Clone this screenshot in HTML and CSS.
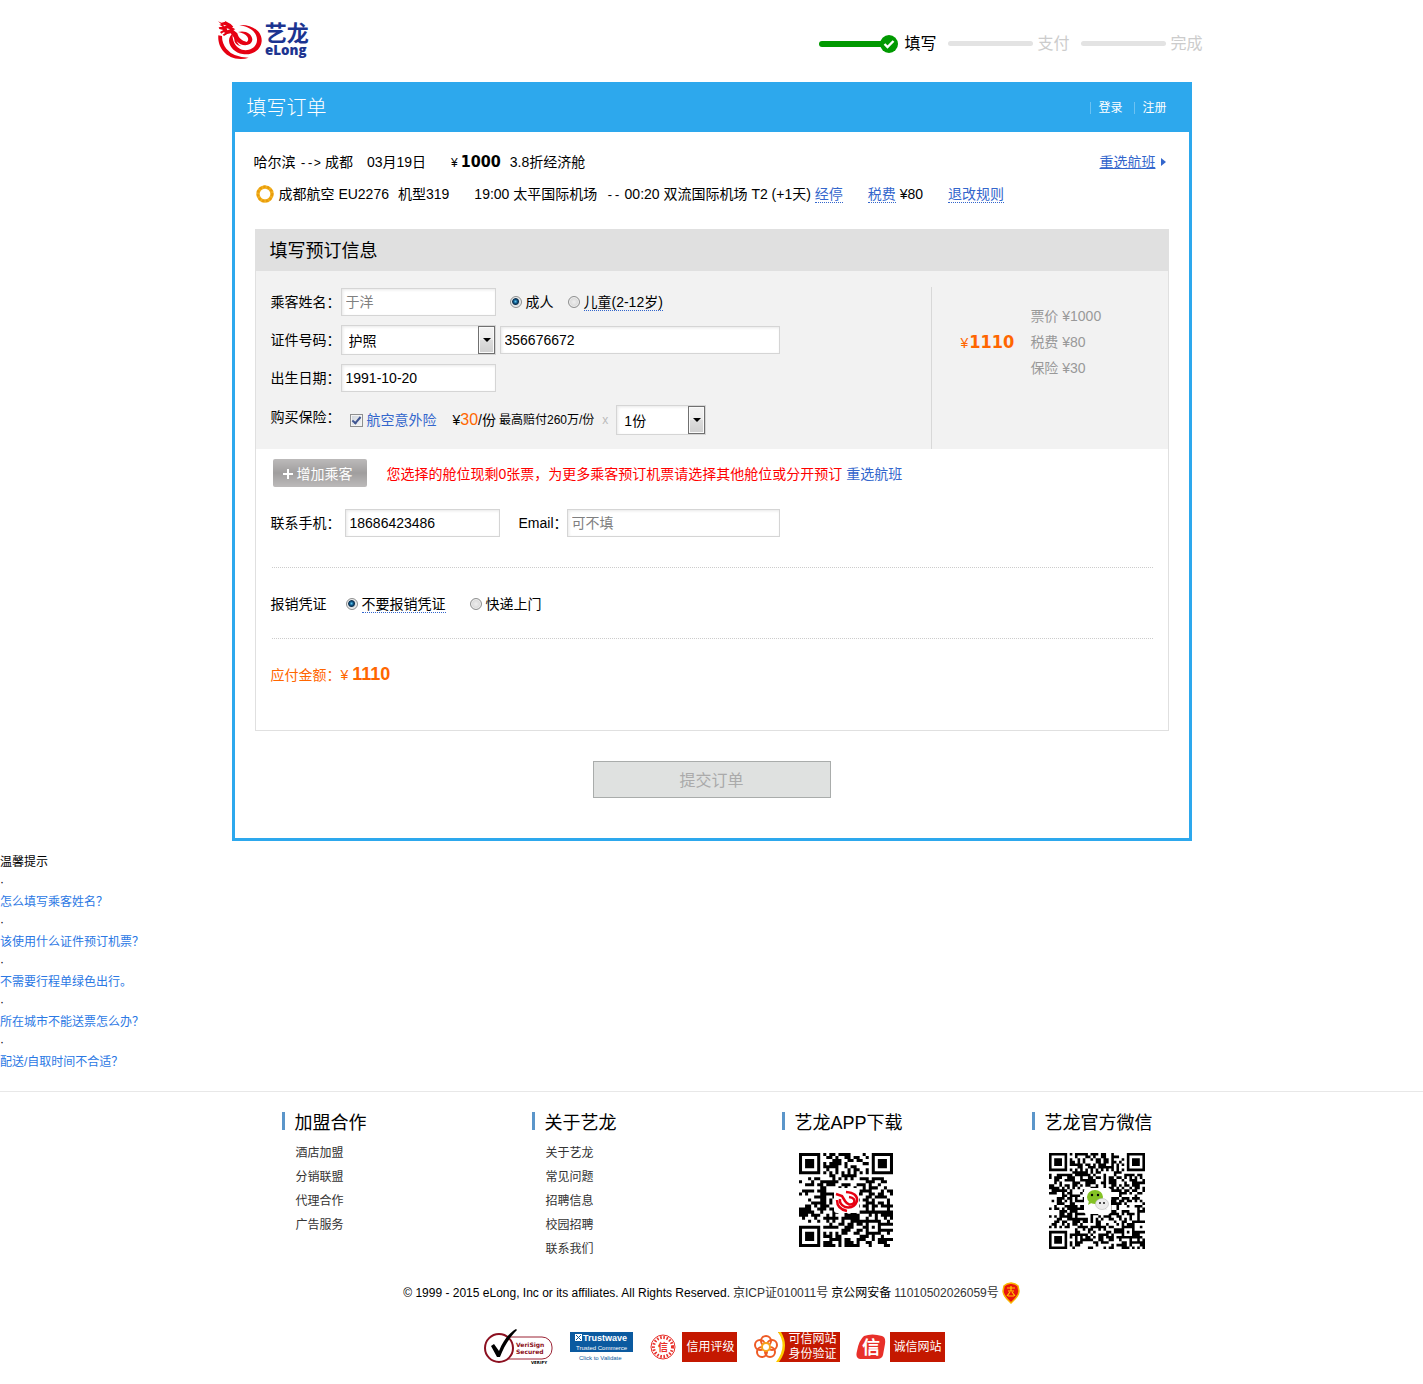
FILE: index.html
```html
<!DOCTYPE html>
<html lang="zh-CN">
<head>
<meta charset="utf-8">
<title>填写订单</title>
<link rel="stylesheet" href="styles.css">
</head>
<body>
<header class="site-header">
  <a class="logo" href="#" aria-label="艺龙 eLong">
    <svg width="92" height="50" viewBox="24 6 276 150">
      <g fill="#e60012">
        <path d="M25 76C22 108 44 146 92 147Q106 147 116 143Q70 142 49 116Q36 100 36 78Z"/>
        <path d="M88 45C128 42 157 66 155 94C152 124 122 137 98 132C76 128 58 112 57 92C57 82 62 74 68 71C66 92 76 112 96 119C118 125 140 112 141 91C142 68 122 51 88 45Z"/>
        <path d="M24 34L34 38L46 35L44 32L62 42L70 50L66 52L76 58L70 60L82 70C86 84 94 92 110 96Q118 90 112 80Q104 70 84 66C104 60 126 70 127 88C127 104 108 110 92 103C76 95 70 78 62 70L52 72L42 78L38 74L46 68L40 67L34 71L30 66L40 60L28 57L26 52L38 50L28 44L34 43Z"/>
        <path d="M79 77Q76 99 94 109Q80 106 74 95Q70 86 74 76Z"/>
      </g>
      <path d="M40 44l10 3l-8 2zM50 55l10 3-8 3z" fill="#fff"/>
      <text class="logo-cn" x="164" y="94">艺龙</text>
      <text class="logo-en" x="165" y="135">eLong</text>
    </svg>
  </a>
  <ol class="steps">
    <li class="step done">
      <span class="step-bar"></span>
      <svg width="18" height="18" viewBox="0 0 18 18"><circle cx="9" cy="9" r="9" fill="#090"/><path d="M4.500 9l3 3 6-6" fill="none" stroke="#fff" stroke-width="2.400"/></svg>
      <span class="step-name">填写</span>
    </li>
    <li class="step"><span class="step-bar"></span><span class="step-name">支付</span></li>
    <li class="step"><span class="step-bar"></span><span class="step-name">完成</span></li>
  </ol>
</header>

<main class="order">
  <div class="order-head">
    <h1>填写订单</h1>
    <nav class="account"><a href="#">登录</a><a href="#">注册</a></nav>
  </div>

  <section class="flight">
    <div class="flight-row">
      <div><span>哈尔滨 <span class="dash">--&gt;</span> 成都</span><span class="gap-m">03月19日</span><span class="gap-l yen">¥</span><b class="price">1000</b><span class="gap-s">3.8折经济舱</span></div>
      <a class="rechoose" href="#"><span>重选航班</span></a>
    </div>
    <div class="flight-row">
      <div class="flight-detail">
        <svg class="carrier" width="18" height="18" viewBox="0 0 18 18"><circle cx="9" cy="9" r="7" fill="none" stroke="#f2b01e" stroke-width="3.400"/><circle cx="9" cy="9" r="7.200" fill="none" stroke="#e89b0c" stroke-width="2.400" stroke-dasharray="2.200 1.800"/></svg>
        <span>成都航空 EU2276</span><span class="gap-s">机型319</span><span class="gap-l">19:00 太平国际机场</span><span class="gap-s"><span class="dash">--</span> 00:20 双流国际机场 T2 (+1天) <a class="hint" href="#">经停</a></span><span class="gap-l"><a class="hint" href="#">税费</a> ¥80</span><a class="hint gap-l" href="#">退改规则</a>
      </div>
    </div>
  </section>

  <form class="booking">
    <h2>填写预订信息</h2>
    <div class="passenger">
      <div class="fields">
        <div class="field">
          <label class="caption" for="name">乘客姓名：</label>
          <input class="text" id="name" type="text" placeholder="于洋">
          <label class="choice"><input type="radio" name="age" checked><span>成人</span></label>
          <label class="choice"><input type="radio" name="age"><span class="hint-text">儿童(2-12岁)</span></label>
        </div>
        <div class="field">
          <label class="caption" for="idno">证件号码：</label>
          <span class="select"><select aria-label="证件类型"><option>护照</option></select></span>
          <input class="text wide" id="idno" type="text" value="356676672">
        </div>
        <div class="field">
          <label class="caption" for="birth">出生日期：</label>
          <input class="text" id="birth" type="text" value="1991-10-20">
        </div>
        <div class="field insurance">
          <span class="caption">购买保险：</span>
          <input class="tick" id="insure" type="checkbox" checked><label class="link" for="insure">航空意外险</label>
          <span class="unit">¥<span class="amount">30</span>/份</span>
          <span class="small">最高赔付260万/份</span>
          <span class="times">x</span>
          <span class="select narrow"><select aria-label="份数"><option>1份</option></select></span>
        </div>
      </div>
      <aside class="fare">
        <div class="fare-total"><span>¥</span><b>1110</b></div>
        <ul><li>票价 ¥1000</li><li>税费 ¥80</li><li>保险 ¥30</li></ul>
      </aside>
    </div>

    <div class="add-row">
      <button class="add" type="button"><svg width="10" height="10" viewBox="0 0 10 10"><path d="M5 0v10M0 5h10" stroke="#fff" stroke-width="2"/></svg>增加乘客</button>
      <p class="warning">您选择的舱位现剩0张票，为更多乘客预订机票请选择其他舱位或分开预订 <a href="#">重选航班</a></p>
    </div>

    <div class="contact">
      <label class="caption" for="phone">联系手机：</label>
      <input class="text" id="phone" type="text" value="18686423486">
      <label class="mail-caption" for="email">Email：</label>
      <input class="text mail" id="email" type="text" placeholder="可不填">
    </div>

    <div class="receipt">
      <span>报销凭证</span>
      <label class="choice"><input type="radio" name="receipt" checked><span class="hint-text">不要报销凭证</span></label>
      <label class="choice"><input type="radio" name="receipt"><span>快递上门</span></label>
    </div>

    <p class="payable">应付金额：¥ <b>1110</b></p>
  </form>

  <button class="submit" type="button">提交订单</button>
</main>

<section class="tips">
  <p>温馨提示</p>
  <ul>
    <li>·<a href="#">怎么填写乘客姓名？</a></li>
    <li>·<a href="#">该使用什么证件预订机票？</a></li>
    <li>·<a href="#">不需要行程单绿色出行。</a></li>
    <li>·<a href="#">所在城市不能送票怎么办？</a></li>
    <li>·<a href="#">配送/自取时间不合适？</a></li>
  </ul>
</section>

<footer class="site-footer">
  <div class="columns">
    <section>
      <h3>加盟合作</h3>
      <ul><li><a href="#">酒店加盟</a></li><li><a href="#">分销联盟</a></li><li><a href="#">代理合作</a></li><li><a href="#">广告服务</a></li></ul>
    </section>
    <section>
      <h3>关于艺龙</h3>
      <ul><li><a href="#">关于艺龙</a></li><li><a href="#">常见问题</a></li><li><a href="#">招聘信息</a></li><li><a href="#">校园招聘</a></li><li><a href="#">联系我们</a></li></ul>
    </section>
    <section>
      <h3>艺龙APP下载</h3>
      <svg class="qr" width="94" height="94" viewBox="0 0 94 94" data-modules="31" data-seed="7">
        <rect x="35" y="35" width="25" height="25" rx="3" fill="#fff"/>
        <g fill="none" stroke="#e60012" stroke-width="2.500"><path d="M37 41l6 2 3 5q4 6 9 2q2-5-5-6"/><path d="M47 39q12 1 11 9q-3 8-12 6q-6-3-5-8"/><path d="M38 47q0 9 10 11"/></g>
      </svg>
    </section>
    <section>
      <h3>艺龙官方微信</h3>
      <svg class="qr" width="96" height="96" viewBox="0 0 96 96" data-modules="37" data-seed="23">
        <rect x="35" y="35" width="27" height="26" rx="3" fill="#fff"/>
        <path d="M40 48l-1 4 5-3z" fill="#84c225"/>
        <ellipse cx="46" cy="44" rx="8" ry="7" fill="#84c225"/>
        <circle cx="43" cy="42" r="1.200"/><circle cx="49" cy="42" r="1.200"/>
        <path d="M56 54l2 3-5-2z" fill="#ddd"/>
        <ellipse cx="53" cy="51" rx="6.500" ry="5.500" fill="#ececec" stroke="#bbb" stroke-width=".6"/>
        <circle cx="51" cy="50" r=".9"/><circle cx="55" cy="50" r=".9"/>
      </svg>
    </section>
  </div>

  <p class="copyright"><span>© 1999 - 2015 eLong, Inc or its affiliates. All Rights Reserved.</span> <a href="#">京ICP证010011号</a> <span>京公网安备</span><a href="#">11010502026059号</a>
    <svg width="18" height="22" viewBox="0 0 18 22"><path d="M9 1l4 1 3 2 1 5c0 5-4 8-8 12C5 17 1 14 1 9l1-5 3-2z" fill="#e8150c" stroke="#f8b500" stroke-width="1.500"/><path d="M5 6h8M9 4v5M6 9h6M5 14l3-4M13 14l-3-4M6 14h6" fill="none" stroke="#fc0" stroke-width="1.200"/></svg>
  </p>

  <div class="badges">
    <a href="#" aria-label="VeriSign Secured"><svg width="69" height="36" viewBox="0 0 69 36">
      <rect x="12" y="8" width="56" height="22" rx="10" fill="#fff" stroke="#9b2335"/>
      <circle cx="15" cy="19" r="14" fill="#fff" stroke="#8c1020" stroke-width="2"/>
      <path d="M7 17l3-2 5 7C19 12 25 4 32 0l1 1C26 8 20 17 16 28h-3z"/>
      <text class="veri" x="32" y="18">VeriSign</text><text class="veri" x="32" y="25">Secured</text>
      <text class="veri-foot" x="47" y="35">VERIFY</text>
    </svg></a>
    <a href="#" aria-label="Trustwave"><svg width="63" height="30" viewBox="0 0 63 30">
      <rect width="63" height="20" fill="#0b5aa0"/><path d="M5 2h7v7H5z" fill="#fff"/><path d="M6 3l5 5M11 3L6 8" stroke="#0b5aa0"/>
      <text class="trust" x="13" y="9">Trustwave</text><text class="trust-sub" x="6" y="18">Trusted Commerce</text><text class="trust-foot" x="9" y="28">Click to Validate</text>
    </svg></a>
    <a class="badge seal" href="#"><svg width="26" height="26" viewBox="0 0 26 26"><g fill="none" stroke="#e8302a"><circle cx="13" cy="13" r="12"/><circle cx="13" cy="13" r="9.500" stroke-width="3" stroke-dasharray="1.600 1.600"/></g><text class="seal-mark" x="8" y="17">信</text></svg><span>信用评级</span></a>
    <a class="badge swirl" href="#"><svg width="34" height="30" viewBox="0 0 34 30"><path d="M24 0h10v30H24Q36 14 24 0z" fill="#c41800"/><path d="M24 0h3q9 15-2 30h-3Q34 14 24 0z" fill="#fc0"/><g fill="none" stroke="#ee5a24" stroke-width="2"><circle cx="12" cy="9" r="5"/><circle cx="18" cy="13" r="5"/><circle cx="16" cy="20" r="5"/><circle cx="8" cy="20" r="5"/><circle cx="6" cy="13" r="5"/></g><circle cx="12" cy="15" r="4" fill="#fff" stroke="#f7a21b" stroke-width="2"/></svg><span>可信网站<br>身份验证</span></a>
    <a class="badge honest" href="#"><svg width="30" height="26" viewBox="0 0 30 26"><path d="M8 2Q16-1 26 2q4 1 3 8l-2 11q-1 4-6 4H4q-5-1-3-8Q3 6 8 2z" fill="#e8302a"/><text class="honest-mark" x="6" y="20">信</text></svg><span>诚信网站</span></a>
  </div>
</footer>
<script src="qr.js"></script>
</body>
</html>
```
FILE: styles.css
```css
*, *::before, *::after { box-sizing: border-box; }
body {
  margin: 0;
  background: #fff;
  color: #000;
  font: 14px/20px "Liberation Sans", "Noto Sans CJK SC", sans-serif;
}
h1, h2, h3, p, ul, ol { margin: 0; padding: 0; font-weight: normal; }
ul, ol { list-style: none; }
a { color: #36c; text-decoration: none; }
button, input, select { font: inherit; margin: 0; }
svg { display: block; flex: none; }

/* header */
.site-header {
  display: flex;
  justify-content: space-between;
  align-items: flex-start;
  max-width: 990px;
  height: 82px;
  margin: 0 auto;
  padding: 12px 4px 0 1px;
}
.logo-cn { font: bold 66px "Liberation Sans", "Noto Sans CJK SC", sans-serif; fill: #1c3490; }
.logo-en { font: 800 40px "Open Sans", sans-serif; fill: #1c3490; }
.steps { display: flex; gap: 12px; padding-top: 21px; font-size: 16px; }
.step { display: flex; align-items: center; color: #ccc; }
.step-bar { width: 85px; height: 5px; margin-right: 4px; border-radius: 3px; background: #e3e3e3; }
.step-name { padding-top: 1px; }
.done { color: #000; }
.done .step-bar { width: 67px; height: 6px; margin-right: -6px; background: #090; }
.done .step-name { margin-left: 6px; }

/* order frame */
.order {
  max-width: 960px;
  margin: 0 auto;
  padding-bottom: 40px;
  border: 3px solid #2da8ed;
}
.order-head {
  display: flex;
  justify-content: space-between;
  align-items: center;
  height: 47px;
  padding: 0 22px 3px 12px;
  background: #2da8ed;
  color: #fff;
}
.order-head h1 { padding-top: 1px; font-size: 20px; font-weight: 300; line-height: 44px; }
.account { display: flex; gap: 12px; padding-top: 1px; font-size: 12px; line-height: 12px; }
.account a { padding-left: 7px; border-left: 1px solid #6cc2f2; color: #fff; }

/* flight summary */
.flight { padding: 14px 23px 0 19px; line-height: 32px; }
.flight-row { display: flex; justify-content: space-between; height: 32px; }
.flight-detail { display: flex; align-items: center; white-space: nowrap; }
.carrier { margin: 0 5px 0 2px; }
.dash { font: 12px "Liberation Mono", monospace; }
.gap-s { margin-left: 9px; }
.gap-m { margin-left: 14px; }
.gap-l { margin-left: 25px; }
.yen { font-size: 12px; }
.price { margin-left: 3px; font: bold 16px "DejaVu Sans Condensed", "DejaVu Sans", sans-serif; }
.hint, .hint-text { line-height: 16px; border-bottom: 1px dotted #36c; }
.rechoose { display: flex; align-items: center; gap: 5px; }
.rechoose span { text-decoration: underline; }
.rechoose::after { content: ""; border: 4px solid transparent; border-left: 5px solid #36c; border-right: 0; }

/* booking form */
.booking { margin: 19px 20px 30px; border: 1px solid #e0e0e0; padding-bottom: 45px; }
.booking h2 { margin-top: -1px; padding: 3px 14px 0; background: #e0e0e0; font-size: 18px; line-height: 39px; }
.passenger { display: flex; background: #f2f2f2; }
.fields { flex: 1; padding: 12px 0 6px 15px; }
.field { display: flex; align-items: center; height: 38px; }
.insurance { height: 46px; }
.caption { width: 70px; padding-bottom: 1px; white-space: nowrap; }
.insurance .caption { padding-bottom: 7px; }
.text {
  width: 155px;
  height: 28px;
  padding: 0 4px;
  border: 1px solid #d5d5d5;
  border-radius: 0;
  background: #fff;
  color: #000;
  box-shadow: inset 1px 1px 3px #e8e8e8;
}
.text::placeholder { color: #808080; }
.wide { width: 280px; margin-left: 4px; }
.select { position: relative; width: 155px; height: 30px; }
.select select {
  width: 100%;
  height: 100%;
  padding: 1px 7px 0;
  border: 1px solid #d5d5d5;
  border-radius: 0;
  background: #fff;
  color: #000;
  appearance: none;
  box-shadow: inset 1px 1px 3px #e8e8e8;
}
.select::before {
  content: "";
  position: absolute;
  top: 1px;
  right: 1px;
  width: 17px;
  height: 28px;
  border: 1px solid #707070;
  background: linear-gradient(#f2f2f2, #ebebeb 50%, #ddd 50%, #cfcfcf);
  box-shadow: inset 0 0 0 1px #fafafa;
  pointer-events: none;
}
.select::after {
  content: "";
  position: absolute;
  top: 13px;
  right: 5px;
  border: 4px solid transparent;
  border-top-color: #000;
  border-bottom: 0;
  pointer-events: none;
}
.narrow { width: 90px; margin-left: 8px; }
.choice { display: flex; align-items: center; margin-left: 14px; white-space: nowrap; }
.choice input {
  appearance: none;
  width: 12px;
  height: 12px;
  margin-right: 4px;
  border: 1px solid #8e8f8f;
  border-radius: 50%;
  background: radial-gradient(#eee, #ccc);
  box-shadow: inset 0 0 0 1px #f0f0f0;
}
.choice input:checked { background: radial-gradient(circle at 45% 45%, #5cc4ee 0, #0a4f80 2px, #10324e 3px, #d8dde0 4px); }
.tick {
  appearance: none;
  display: grid;
  place-items: center;
  width: 13px;
  height: 13px;
  margin: 0 4px 0 9px;
  border: 1px solid #8e8f8f;
  background: linear-gradient(135deg, #ccd2da, #f6f6f6);
  box-shadow: inset 0 0 0 1px #f4f4f4;
}
.tick:checked::before {
  content: "";
  width: 5px;
  height: 9px;
  margin-bottom: 2px;
  border: solid #3f5591;
  border-width: 0 2px 2px 0;
  transform: rotate(40deg);
}
.link { color: #36c; }
.unit { margin-left: 16px; }
.amount { color: #f60; font-size: 16px; }
.small { margin-left: 3px; font-size: 12px; }
.times { margin-left: 8px; color: #bbb; font-size: 12px; }
.fare {
  display: flex;
  align-items: center;
  width: 237px;
  margin-top: 16px;
  padding: 0 0 52px 29px;
  border-left: 1px solid #d8d8d8;
}
.fare-total { padding-bottom: 1px; color: #f60; white-space: nowrap; }
.fare-total b { margin-left: 1px; font: bold 18px "DejaVu Sans Condensed", "DejaVu Sans", sans-serif; }
.fare ul { margin-left: 16px; color: #999; line-height: 26px; }

.add-row { display: flex; align-items: center; padding: 10px 17px 0; }
.add {
  display: flex;
  align-items: center;
  gap: 4px;
  width: 94px;
  height: 28px;
  padding: 1px 0 0 10px;
  border: 0;
  border-radius: 2px;
  background: linear-gradient(#bcbaba, #a09e9e 50%, #bcbaba);
  color: #fff;
}
.warning { margin-left: 20px; padding-top: 2px; color: #f00; }
.contact { display: flex; align-items: center; padding: 22px 14px 30px 15px; }
.contact .caption { width: 74px; }
.mail-caption { width: 48px; margin-left: 19px; padding-bottom: 1px; white-space: nowrap; }
.mail { width: 213px; }
.receipt {
  display: flex;
  align-items: center;
  gap: 10px;
  height: 72px;
  margin: 0 15px 0 16px;
  padding-top: 2px;
  border: dotted #ccc;
  border-width: 1px 0;
}
.receipt > span { margin: 0 -5px 0 -1px; }
.payable { padding: 25px 15px 0; color: #f60; }
.payable b { font-size: 18px; }
.submit {
  display: block;
  width: 238px;
  height: 37px;
  margin: 0 auto;
  padding: 2px 0 0;
  border: 1px solid #a9acab;
  background: #dfe1e0;
  color: #aaa;
  font-size: 16px;
}

/* tips */
.tips { padding: 11px 0 19px; font-size: 12px; }
.tips a { display: block; color: #2b78e4; }

/* footer */
.site-footer { padding: 20px 0; border-top: 1px solid #e8e8e8; font-size: 12px; }
.columns { display: grid; grid-template-columns: repeat(4, 1fr); max-width: 1000px; margin: 0 auto; }
.columns section { padding-left: 70px; }
.columns h3 { height: 18px; padding-left: 10px; border-left: 3px solid #5b96ca; font-size: 18px; line-height: 22px; white-space: nowrap; }
.columns ul { padding: 11px 0 0 14px; line-height: 24px; }
.columns ul a { color: #333; }
.qr { margin: 23px 0 0 17px; }
.copyright { display: flex; justify-content: center; align-items: center; padding: 21px 0 25px; }
.copyright a { margin: 0 3px; color: #333; }
.badges { display: flex; justify-content: center; align-items: center; height: 36px; padding-left: 6px; }
.badges > a { margin-right: 17px; }
.badge { display: flex; align-items: center; color: #fff; line-height: 30px; }
.badge span { padding: 0 3px 0 4px; background: #c41800; }
.badges .seal { gap: 6px; }
.badges .swirl { margin-right: 16px; }
.badge.swirl span { padding-left: 0; line-height: 15px; }
.badges .honest { gap: 4px; margin-right: 0; }
.veri { font: bold 6px "DejaVu Sans", sans-serif; fill: #8c1020; }
.veri-foot { font: bold 4px "DejaVu Sans", sans-serif; }
.trust { font: bold 9px "Liberation Sans", sans-serif; fill: #fff; }
.trust-sub { font: 6px "Liberation Sans", sans-serif; fill: #fff; }
.trust-foot { font: 6px "Liberation Sans", sans-serif; fill: #0b5aa0; }
.seal-mark { font: bold 10px "Noto Sans CJK SC", sans-serif; fill: #e8302a; }
.honest-mark { font: bold 18px "Noto Sans CJK SC", sans-serif; fill: #fff; }
```
FILE: qr.js
```js
// Fills each .qr svg with its module grid, behind the centre logo.
document.querySelectorAll('.qr').forEach(function (svg) {
  var n = Number(svg.dataset.modules);
  var seed = Number(svg.dataset.seed);
  var size = svg.viewBox.baseVal.width / n;

  function next() {
    seed = (seed * 1103515245 + 12345) % 2147483648;
    return seed / 2147483648;
  }
  function ring(x, y, cx, cy) {
    return Math.max(Math.abs(x - cx), Math.abs(y - cy));
  }

  var d = '';
  for (var y = 0; y < n; y++) {
    for (var x = 0; x < n; x++) {
      var on = next() < 0.5;
      if (x === 6 || y === 6) on = (x + y) % 2 === 0;
      var small = ring(x, y, n - 7, n - 7);
      if (small <= 2) on = small !== 1;
      [[3, 3], [n - 4, 3], [3, n - 4]].forEach(function (c) {
        var r = ring(x, y, c[0], c[1]);
        if (r <= 4) on = r !== 2 && r !== 4;
      });
      if (on) d += 'M' + x * size + ' ' + y * size + 'h' + size + 'v' + size + 'h' + -size + 'z';
    }
  }
  var path = document.createElementNS('http://www.w3.org/2000/svg', 'path');
  path.setAttribute('d', d);
  svg.insertBefore(path, svg.firstChild);
});
```
